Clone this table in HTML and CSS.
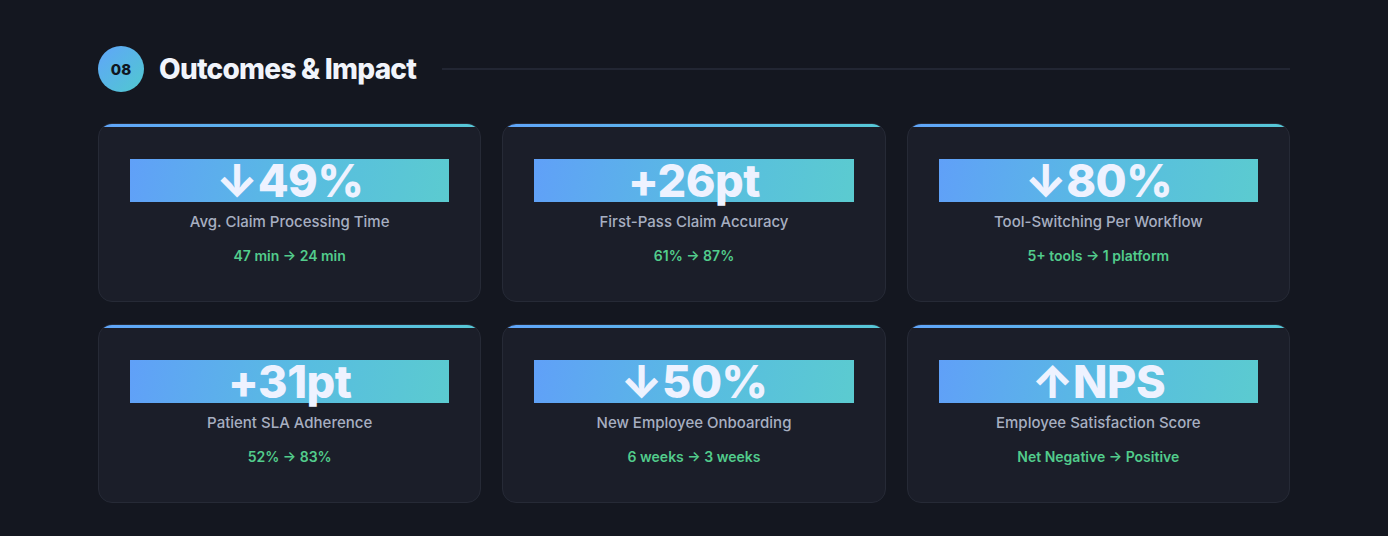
FILE: index.html
```html
<!DOCTYPE html>
<html lang="en">
<head>
<meta charset="utf-8">
<title>Outcomes &amp; Impact</title>
<link rel="stylesheet" href="styles.css">
</head>
<body>
<section class="section">
  <header class="section-head">
    <div class="num">08</div>
    <h2 class="title">Outcomes &amp; Impact</h2>
    <div class="rule"></div>
  </header>
  <div class="grid">
    <div class="card">
      <div class="metric">↓49%</div>
      <div class="label">Avg. Claim Processing Time</div>
      <div class="delta">47 min → 24 min</div>
    </div>
    <div class="card">
      <div class="metric">+26pt</div>
      <div class="label">First-Pass Claim Accuracy</div>
      <div class="delta">61% → 87%</div>
    </div>
    <div class="card">
      <div class="metric">↓80%</div>
      <div class="label">Tool-Switching Per Workflow</div>
      <div class="delta">5+ tools → 1 platform</div>
    </div>
    <div class="card">
      <div class="metric">+31pt</div>
      <div class="label">Patient SLA Adherence</div>
      <div class="delta">52% → 83%</div>
    </div>
    <div class="card">
      <div class="metric">↓50%</div>
      <div class="label">New Employee Onboarding</div>
      <div class="delta">6 weeks → 3 weeks</div>
    </div>
    <div class="card">
      <div class="metric">↑NPS</div>
      <div class="label">Employee Satisfaction Score</div>
      <div class="delta">Net Negative → Positive</div>
    </div>
  </div>
</section>
</body>
</html>
```
FILE: styles.css
```css
* { box-sizing: border-box; }
html, body {
  margin: 0;
  background: #141720;
  font-family: Inter, "Noto Sans", sans-serif;
}
.section {
  padding: 46px 98px 0 98px;
}
.section-head {
  display: flex;
  align-items: center;
  height: 46px;
}
.num {
  width: 46px;
  height: 46px;
  border-radius: 50%;
  background: linear-gradient(135deg, #60a5fa, #50c9cf);
  color: #0f1520;
  font-weight: 800;
  font-size: 15px;
  display: flex;
  align-items: center;
  justify-content: center;
  flex: none;
}
.title {
  margin: 0 0 0 15px;
  color: #f1f4fb;
  font-size: 28px;
  font-weight: 800;
  letter-spacing: -0.75px;
  white-space: nowrap;
}
.rule {
  flex: 1;
  height: 2px;
  background: #222633;
  margin-left: 26px;
}
.grid {
  margin-top: 31px;
  display: grid;
  grid-template-columns: repeat(3, 1fr);
  column-gap: 21px;
  row-gap: 22px;
}
.card {
  position: relative;
  overflow: hidden;
  background: #1b1e29;
  border: 1px solid #262a36;
  border-radius: 14px;
  padding: 35px 31px 36px;
  text-align: center;
}
.card::before {
  content: "";
  position: absolute;
  left: 0;
  right: 0;
  top: 0;
  height: 3px;
  background: linear-gradient(90deg, #60a5fa, #56c8d6);
}
.metric {
  height: 43px;
  line-height: 43px;
  font-size: 45px;
  font-weight: 800;
  letter-spacing: -0.5px;
  color: #eef2ff;
  background: linear-gradient(100deg, #60a0f8, #58bde0 55%, #5bcbd0);
}
.label {
  margin-top: 10px;
  line-height: 20px;
  font-size: 15px;
  font-weight: 500;
  color: #a7afc1;
}
.delta {
  margin-top: 15px;
  line-height: 18px;
  font-size: 14px;
  font-weight: 600;
  color: #52cc8c;
}
```
